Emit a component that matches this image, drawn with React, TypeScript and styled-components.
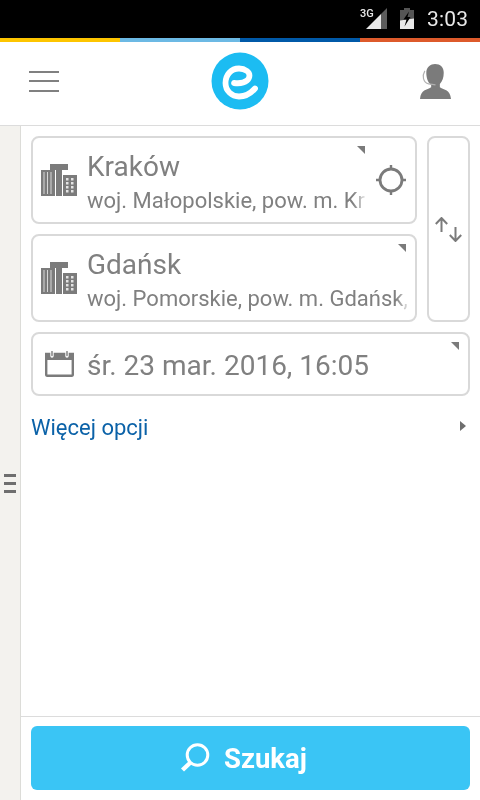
import React from 'react'
import styled, { createGlobalStyle, css } from 'styled-components'

const GlobalStyle = createGlobalStyle`
  html, body { margin: 0; padding: 0; background: #fff; }
  * { box-sizing: border-box; }
`

const greyText = css`
  will-change: transform;
`

const Signal = () => (
  <svg width="21" height="21" viewBox="0 0 21 21">
    <path d="M0 21 L15 21 L15 6 Z" fill="#e8e8e8" />
    <path d="M15 21 H21 V0 L15 6 Z" fill="#5c5c5c" />
  </svg>
)

const Battery = () => (
  <svg width="14" height="21" viewBox="0 0 14 21">
    <path d="M4 0 H10 V2 H14 V21 H0 V2 H4 Z" fill="#555" />
    <path d="M0 12.500 L14 10.500 V21 H0 Z" fill="#e8e8e8" />
    <path d="M9 3.500 L3.500 11.500 H6.500 L4.500 18.500 L10.500 9 H7.500 Z" fill="#000" />
  </svg>
)

const Logo = () => (
  <svg width="58" height="58" viewBox="0 0 58 58">
    <circle cx="29" cy="29" r="28.5" fill="#1cbcf2" />
    <path
      d="M23 31 C27 31.500 33 31 36 28.500 C39 26 39.500 21.500 36 19 C33.500 17.200 30.500 16.500 28 16.500 C20 16.500 14.500 23 14.500 31 C14.500 39 21 44.500 28 44.500 C35 44.500 40 41 44 36.500"
      fill="none"
      stroke="#fff"
      strokeWidth="5.800"
      strokeLinecap="round"
    />
  </svg>
)

const Agent = () => (
  <svg width="31" height="35" viewBox="0 0 32 36">
    <path
      d="M6.500 9 C6.500 3 11 0 15.500 0 C21 0 24.500 3.500 24.500 9 C24.500 14 23 18 20.500 20.500 V24 C25 27 31 26 32 36 H0 C1 26 7 27 11.500 24 V21.500 C8 19 6.500 14 6.500 9 Z"
      fill="#7b7b7b"
    />
    <path d="M5 7 C2 12 3 19 9 20.500 L16 21.500" fill="none" stroke="#b0b0b0" strokeWidth="1.200" />
  </svg>
)

const City = () => (
  <svg width="36" height="32" viewBox="0 0 36 32">
    <path d="M0 6 H14 V32 H0 Z" fill="#7b7b7b" />
    <path d="M3 8 V30 M6.500 8 V30 M10 8 V30" stroke="#d8d8d8" strokeWidth="1" />
    <path d="M9 0 H27 V6 H21 V32 H15 V6 H9 Z" fill="#7b7b7b" />
    <path d="M22 11 H36 V32 H22 Z" fill="#7b7b7b" />
    <path
      d="M25 14 h2.500 v2.500 h-2.500 z M30 14 h2.500 v2.500 h-2.500 z M25 18 h2.500 v2.500 h-2.500 z M30 18 h2.500 v2.500 h-2.500 z M25 22 h2.500 v2.500 h-2.500 z M30 22 h2.500 v2.500 h-2.500 z M25 26 h2.500 v2.500 h-2.500 z M30 26 h2.500 v2.500 h-2.500 z"
      fill="#e4e4e4"
    />
  </svg>
)

const Locate = () => (
  <svg width="30" height="30" viewBox="0 0 30 30">
    <circle cx="15" cy="15" r="11" fill="none" stroke="#7b7b7b" strokeWidth="2.800" />
    <path d="M15 0 V4 M15 26 V30 M0 15 H4 M26 15 H30" stroke="#7b7b7b" strokeWidth="2.400" />
  </svg>
)

const Swap = () => (
  <svg width="28" height="25" viewBox="0 0 28 25">
    <path
      d="M6.500 15 V1 M0.800 7 L6.500 1 L12.200 7 M20.500 10 V24 M14.800 18 L20.500 24 L26.200 18"
      fill="none"
      stroke="#7b7b7b"
      strokeWidth="2"
    />
  </svg>
)

const CalendarIcon = () => (
  <svg width="29" height="26" viewBox="0 0 29 26">
    <path d="M1.200 3 H27.800 V24 A1 1 0 0 1 26.800 24.800 H2.200 A1 1 0 0 1 1.200 24 Z" fill="#fff" stroke="#7b7b7b" strokeWidth="2.400" />
    <path d="M1 3 H28 V9 H1 Z" fill="#7b7b7b" />
    <path d="M7 1 V5 M22 1 V5" stroke="#fff" strokeWidth="3.400" strokeLinecap="round" />
    <path d="M7 0.500 V4.500 M22 0.500 V4.500" stroke="#7b7b7b" strokeWidth="1.400" strokeLinecap="round" />
  </svg>
)

const Magnifier = () => (
  <svg width="30" height="30" viewBox="0 0 30 30">
    <circle cx="17.500" cy="12" r="10.300" fill="none" stroke="#fff" strokeWidth="3" />
    <path d="M10 20 L2.500 27" stroke="#fff" strokeWidth="4.400" />
  </svg>
)

const App: React.FC = () => {
  return (
    <Page>
      <GlobalStyle />
      <StatusBar>
        <NetworkLabel>3G</NetworkLabel>
        <Signal />
        <BatteryWrap>
          <Battery />
        </BatteryWrap>
        <Clock>3:03</Clock>
      </StatusBar>
      <Strip>
        <StripPart color="#fdc500" />
        <StripPart color="#6cb9e4" />
        <StripPart color="#0059a8" />
        <StripPart color="#dd5a2b" />
      </Strip>
      <Header>
        <Burger>
          <span />
          <span />
          <span />
        </Burger>
        <Logo />
        <Agent />
      </Header>
      <Main>
        <Sidebar>
          <Handle>
            <span />
            <span />
            <span />
          </Handle>
        </Sidebar>
        <Content>
          <Form>
            <Top>
              <Places>
                <Card>
                  <Corner inset={50} />
                  <City />
                  <PlaceText>
                    <PlaceName>Kraków</PlaceName>
                    <PlaceSub>woj. Małopolskie, pow. m. Kr</PlaceSub>
                  </PlaceText>
                  <LocateWrap>
                    <Locate />
                  </LocateWrap>
                </Card>
                <Card>
                  <Corner inset={9} />
                  <City />
                  <PlaceText>
                    <PlaceName>Gdańsk</PlaceName>
                    <PlaceSub>woj. Pomorskie, pow. m. Gdańsk,</PlaceSub>
                  </PlaceText>
                </Card>
              </Places>
              <SwapButton>
                <Swap />
              </SwapButton>
            </Top>
            <DateCard>
              <Corner inset={9} />
              <CalendarIcon />
              <DateText>śr. 23 mar. 2016, 16:05</DateText>
            </DateCard>
            <MoreRow>
              <MoreLink>Więcej opcji</MoreLink>
              <Arrow />
            </MoreRow>
          </Form>
          <Footer>
            <SearchButton>
              <Magnifier />
              <SearchLabel>Szukaj</SearchLabel>
            </SearchButton>
          </Footer>
        </Content>
      </Main>
    </Page>
  )
}

export default App

const Page = styled.div`
  width: 480px;
  height: 800px;
  display: flex;
  flex-direction: column;
  overflow: hidden;
  background: #fff;
  font-family: Roboto, 'Liberation Sans', sans-serif;
`
const StatusBar = styled.div`
  height: 38px;
  background: #000;
  display: flex;
  align-items: flex-start;
  justify-content: flex-end;
  padding: 8px 12px 0 0;
  color: #e8e8e8;
`
const NetworkLabel = styled.span`
  ${greyText}
  font-size: 11px;
  font-weight: 500;
  line-height: 10px;
  margin: 1px -8px 0 0;
`
const BatteryWrap = styled.div`
  margin-left: 13px;
  margin-right: 13px;
`
const Clock = styled.span`
  ${greyText}
  font-size: 21px;
  line-height: 22px;
  letter-spacing: 0.2px;
`
const Strip = styled.div`
  height: 4px;
  display: grid;
  grid-template-columns: repeat(4, 1fr);
`
const StripPart = styled.div<{ color: string }>`
  background: ${(p) => p.color};
`
const Header = styled.header`
  height: 84px;
  border-bottom: 1px solid #dcdcdc;
  display: flex;
  align-items: center;
  justify-content: space-between;
  padding: 0 29px 5px 29px;
`
const Burger = styled.div`
  width: 30px;
  height: 21px;
  display: flex;
  flex-direction: column;
  justify-content: space-between;
  & > span {
    height: 2px;
    background: #808080;
  }
`
const Main = styled.div`
  flex: 1;
  display: flex;
  min-height: 0;
`
const Sidebar = styled.aside`
  width: 21px;
  background: #f3f2ee;
  border-right: 1px solid #dcdcd8;
  padding: 348px 0 0 4px;
`
const Handle = styled.div`
  width: 12px;
  display: flex;
  flex-direction: column;
  gap: 5px;
  & > span {
    height: 3px;
    background: #6e6e6e;
  }
`
const Content = styled.main`
  flex: 1;
  display: flex;
  flex-direction: column;
  min-width: 0;
`
const Form = styled.div`
  flex: 1;
  padding: 10px 10px 0;
  display: flex;
  flex-direction: column;
  gap: 10px;
`
const Top = styled.div`
  display: flex;
  gap: 10px;
`
const Places = styled.div`
  flex: 1;
  min-width: 0;
  display: flex;
  flex-direction: column;
  gap: 10px;
`
const Card = styled.div`
  position: relative;
  height: 88px;
  border: 2px solid #d9d9d9;
  border-radius: 8px;
  display: flex;
  align-items: center;
  padding: 0 0 0 8px;
`
const Corner = styled.i<{ inset: number }>`
  position: absolute;
  top: 8px;
  right: ${(p) => p.inset}px;
  width: 0;
  height: 0;
  border-top: 8px solid #7b7b7b;
  border-left: 8px solid transparent;
`
const PlaceText = styled.div`
  flex: 1;
  min-width: 0;
  margin-left: 10px;
  padding-top: 4px;
`
const PlaceName = styled.div`
  ${greyText}
  font-size: 28px;
  line-height: 32px;
  color: #808080;
  margin-bottom: 6px;
`
const PlaceSub = styled.div`
  font-size: 22px;
  line-height: 24px;
  color: #808080;
  white-space: nowrap;
  -webkit-mask-image: linear-gradient(to right, #000 calc(100% - 12px), rgba(0, 0, 0, 0.2) 100%);
  mask-image: linear-gradient(to right, #000 calc(100% - 12px), rgba(0, 0, 0, 0.2) 100%);
  width: fit-content;
`
const LocateWrap = styled.div`
  width: 50px;
  padding-left: 11px;
  flex-shrink: 0;
  display: flex;
`
const SwapButton = styled.div`
  width: 43px;
  border: 2px solid #d9d9d9;
  border-radius: 8px;
  display: flex;
  align-items: center;
  justify-content: center;
`
const DateCard = styled(Card)`
  height: 64px;
  padding-left: 12px;
`
const DateText = styled.div`
  ${greyText}
  font-size: 28px;
  color: #808080;
  margin-left: 13px;
  padding-top: 3px;
`
const MoreRow = styled.div`
  display: flex;
  align-items: center;
  justify-content: space-between;
  margin-top: 8px;
  padding-right: 4px;
`
const MoreLink = styled.a`
  ${greyText}
  font-size: 22px;
  line-height: 28px;
  color: #0b62a8;
`
const Arrow = styled.i`
  width: 0;
  height: 0;
  margin-bottom: 5px;
  border-left: 6px solid #6e6e6e;
  border-top: 5px solid transparent;
  border-bottom: 5px solid transparent;
`
const Footer = styled.footer`
  height: 84px;
  border-top: 1px solid #dcdcdc;
  padding: 9px 10px 10px;
`
const SearchButton = styled.button`
  width: 100%;
  height: 64px;
  border: 0;
  border-radius: 6px;
  padding: 0 14px 0 0;
  background: #3ac5f5;
  color: #fff;
  font-family: inherit;
  display: flex;
  align-items: center;
  justify-content: center;
  gap: 14px;
`
const SearchLabel = styled.span`
  ${greyText}
  font-size: 27.500px;
  font-weight: 700;
`
